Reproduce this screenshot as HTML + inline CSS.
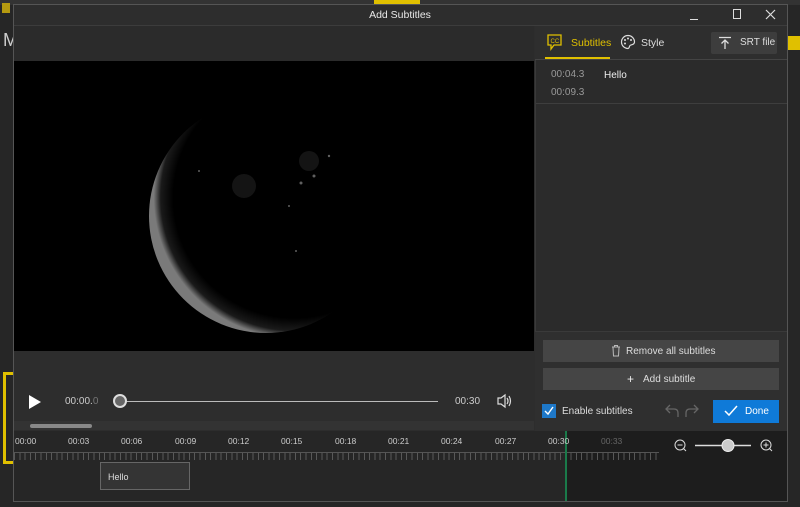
<!DOCTYPE html>
<html><head><style>
*{margin:0;padding:0;box-sizing:border-box}
body{width:800px;height:507px;background:#262626;font-family:"Liberation Sans",sans-serif;position:relative;overflow:hidden;color:#ddd}
.a{position:absolute}
.t{font-size:10px;white-space:nowrap}
</style></head><body>
<div class="a" style="left:0;top:0;width:800px;height:5px;background:#333"></div>
<div class="a" style="left:2px;top:3px;width:8px;height:10px;background:#b59a10"></div>
<div class="a" style="left:374px;top:0;width:46px;height:4px;background:#e0c000"></div>
<div class="a t" style="left:3px;top:30px;font-size:18px;color:#ccc">M</div>
<div class="a" style="left:3px;top:372px;width:10px;height:92px;border:3px solid #e0c000;border-right:none"></div>
<div class="a" style="left:787px;top:36px;width:13px;height:14px;background:#e0c000"></div>
<div class="a" style="left:13px;top:4px;width:775px;height:498px;background:#2d2d2d;border:1px solid #555"></div>
<div class="a t" style="left:0;width:800px;top:9px;text-align:center;color:#e8e8e8;font-size:10.5px">Add Subtitles</div>
<div class="a" style="left:690px;top:19px;width:8px;height:1px;background:#ddd"></div>
<div class="a" style="left:733px;top:9px;width:8px;height:10px;border:1px solid #ddd"></div>
<svg class="a" style="left:765px;top:9px" width="11" height="11"><path d="M1 1L10 10M10 1L1 10" stroke="#ddd" stroke-width="1.2"/></svg>
<div class="a" style="left:14px;top:25px;width:773px;height:1px;background:#3c3c3c"></div>
<div class="a" style="left:14px;top:26px;width:520px;height:35px;background:#2b2b2b"></div>
<div class="a" style="left:14px;top:61px;width:520px;height:290px;background:#000"></div>
<svg class="a" style="left:14px;top:61px" width="520" height="290">
<defs>
<radialGradient id="g" cx="0.62" cy="0.42" r="0.6"><stop offset="0.86" stop-color="#000"/><stop offset="0.95" stop-color="#1a1a1a"/><stop offset="1" stop-color="#7a7a7a"/></radialGradient>
</defs>
<circle cx="252" cy="155" r="117" fill="url(#g)"/>
<g fill="#888" opacity=".7"><circle cx="300" cy="115" r="1.5"/><circle cx="287" cy="122" r="1.5"/><circle cx="315" cy="95" r="1.2"/><circle cx="275" cy="145" r="1"/><circle cx="282" cy="190" r="1"/><circle cx="185" cy="110" r="1"/></g>
<g fill="#333" opacity=".4"><circle cx="230" cy="125" r="12"/><circle cx="295" cy="100" r="10"/></g>
</svg>
<svg class="a" style="left:28px;top:394px" width="14" height="16"><path d="M1 1L13 8L1 15Z" fill="#fff"/></svg>
<div class="a t" style="left:65px;top:396px;color:#ccc">00:00.<span style="color:#777">0</span></div>
<div class="a" style="left:120px;top:401px;width:318px;height:1px;background:#bbb"></div>
<div class="a" style="left:113px;top:394px;width:14px;height:14px;border-radius:50%;background:#666;border:2px solid #ddd"></div>
<div class="a t" style="left:455px;top:396px;color:#ccc">00:30</div>
<svg class="a" style="left:496px;top:393px" width="18" height="16"><path d="M2 5H5L9 2V14L5 11H2Z" fill="none" stroke="#ddd" stroke-width="1.2"/><path d="M11 5Q13 8 11 11M13 3Q16 8 13 13" fill="none" stroke="#ddd" stroke-width="1.2"/></svg>
<div class="a" style="left:14px;top:421px;width:520px;height:9px;background:#333"></div>
<div class="a" style="left:30px;top:424px;width:62px;height:4px;border-radius:2px;background:#888"></div>
<div class="a" style="left:535px;top:26px;width:252px;height:305px;background:#2b2b2b;border-left:1px solid #3a3a3a"></div>
<div class="a" style="left:535px;top:26px;width:252px;height:34px;background:#2e2e2e;border-bottom:1px solid #444"></div>
<svg class="a" style="left:546px;top:33px" width="18" height="18"><path d="M2 2H15V12H8L5 16V12H2Z" fill="none" stroke="#e0c000" stroke-width="1.3"/><text x="4.5" y="10" font-size="6" fill="#e0c000" font-family="Liberation Sans">CC</text></svg>
<div class="a t" style="left:571px;top:37px;color:#e0c000;font-size:10.5px">Subtitles</div>
<div class="a" style="left:545px;top:57px;width:65px;height:2px;background:#e0c000"></div>
<svg class="a" style="left:620px;top:34px" width="16" height="16"><path d="M8 1.5A6.5 6.5 0 1 0 8 14.5C9.5 14.5 9 12.5 10 11.5S14.5 11 14.5 8A6.5 6.5 0 0 0 8 1.5Z" fill="none" stroke="#ddd" stroke-width="1.2"/><circle cx="5" cy="6" r="1" fill="#ddd"/><circle cx="8" cy="4.5" r="1" fill="#ddd"/><circle cx="11" cy="6" r="1" fill="#ddd"/><circle cx="5" cy="9.5" r="1" fill="#ddd"/></svg>
<div class="a t" style="left:641px;top:37px;color:#ddd;font-size:10.5px">Style</div>
<div class="a" style="left:711px;top:32px;width:66px;height:22px;background:#3d3d3d;border-radius:2px"></div>
<svg class="a" style="left:718px;top:36px" width="14" height="14"><path d="M1 1.5H13M7 13V4M3.5 7.5L7 4L10.5 7.5" fill="none" stroke="#ddd" stroke-width="1.3"/></svg>
<div class="a t" style="left:740px;top:37px;color:#ddd;font-size:10px">SRT file</div>
<div class="a t" style="left:551px;top:69px;color:#999">00:04.3</div>
<div class="a t" style="left:551px;top:87px;color:#999">00:09.3</div>
<div class="a t" style="left:604px;top:70px;color:#eee">Hello</div>
<div class="a" style="left:536px;top:103px;width:251px;height:1px;background:#3e3e3e"></div>
<div class="a" style="left:535px;top:331px;width:252px;height:100px;background:#2f2f2f;border-top:1px solid #3a3a3a"></div>
<div class="a" style="left:543px;top:340px;width:236px;height:22px;background:#454545"></div>
<svg class="a" style="left:611px;top:344px" width="10" height="13"><path d="M1 3H9M3.5 3V1.5H6.5V3M2 3.5L2.5 12H7.5L8 3.5" fill="none" stroke="#bbb" stroke-width="1"/></svg>
<div class="a t" style="left:626px;top:346px;color:#ddd">Remove all subtitles</div>
<div class="a" style="left:543px;top:368px;width:236px;height:22px;background:#454545"></div>
<div class="a t" style="left:627px;top:372px;color:#eee;font-size:12px">+</div>
<div class="a t" style="left:643px;top:374px;color:#ddd">Add subtitle</div>
<div class="a" style="left:542px;top:404px;width:14px;height:14px;background:#1e78c8"></div>
<svg class="a" style="left:543px;top:405px" width="12" height="12"><path d="M2 6L5 9L10 2" fill="none" stroke="#fff" stroke-width="1.4"/></svg>
<div class="a t" style="left:562px;top:406px;color:#ddd">Enable subtitles</div>
<svg class="a" style="left:664px;top:403px" width="40" height="16"><path d="M6 2L2 6L6 10M2 6H10Q14 6 14 10V14" fill="none" stroke="#666" stroke-width="1.3"/><path d="M30 2L34 6L30 10M34 6H26Q22 6 22 10V14" fill="none" stroke="#666" stroke-width="1.3"/></svg>
<div class="a" style="left:713px;top:400px;width:66px;height:23px;background:#0f7ad8"></div>
<svg class="a" style="left:724px;top:405px" width="14" height="12"><path d="M1 6L5 10L13 1" fill="none" stroke="#fff" stroke-width="1.5"/></svg>
<div class="a t" style="left:745px;top:406px;color:#fff">Done</div>
<div class="a" style="left:14px;top:431px;width:773px;height:70px;background:#262626"></div>
<div class="a" style="left:566px;top:431px;width:221px;height:70px;background:#1d1d1d"></div>
<div class="a" style="left:14px;top:446px;width:645px;height:14px;background:repeating-linear-gradient(90deg,#666 0 1px,transparent 1px 5.3px);opacity:.8;clip-path:inset(7px 0 0 0)"></div>
<div class="a" style="left:14px;top:452px;width:645px;height:1px;background:#555"></div>
<div class="a" style="left:565px;top:431px;width:2px;height:70px;background:#1a7a4a"></div>
<div class="a t" style="left:15px;top:436px;font-size:8.5px;color:#ccc">
<span class="a" style="left:0">00:00</span><span class="a" style="left:53px">00:03</span><span class="a" style="left:106px">00:06</span><span class="a" style="left:160px">00:09</span><span class="a" style="left:213px">00:12</span><span class="a" style="left:266px">00:15</span><span class="a" style="left:320px">00:18</span><span class="a" style="left:373px">00:21</span><span class="a" style="left:426px">00:24</span><span class="a" style="left:480px">00:27</span><span class="a" style="left:533px">00:30</span><span class="a" style="left:586px;color:#666">00:33</span></div>
<div class="a" style="left:100px;top:462px;width:90px;height:28px;background:#343434;border:1px solid #666"></div>
<div class="a t" style="left:108px;top:472px;color:#ddd;font-size:9px">Hello</div>
<svg class="a" style="left:673px;top:438px" width="102" height="16"><circle cx="7" cy="7" r="5" fill="none" stroke="#ddd"/><path d="M4.5 7H9.5M10.5 10.5L13 13" stroke="#ddd"/><path d="M22 7.5H78" stroke="#ddd" stroke-width="1.5"/><circle cx="55" cy="7.5" r="6" fill="#ccc" stroke="#eee"/><circle cx="93" cy="7" r="5" fill="none" stroke="#ddd"/><path d="M90.5 7H95.5M93 4.5V9.5M96.5 10.5L99 13" stroke="#ddd"/></svg>
</body></html>
